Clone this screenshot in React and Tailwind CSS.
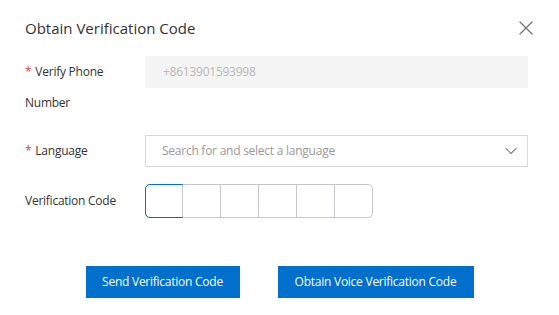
import { X, ChevronDown } from 'lucide-react';

export default function App() {
  const boxes = [0, 1, 2, 3, 4, 5];
  const required = "before:content-['*'] before:text-[#e0413a] before:mr-[4px]";

  return (
    <div className="w-[559px] h-[315px] bg-white text-[#333] font-['Open_Sans',sans-serif] tracking-[-0.25px] relative overflow-hidden">
      {/* Header */}
      <div className="flex items-center justify-between pl-[25px] pr-[21px] pt-[16px]">
        <h2 className="text-[15px] leading-[22px] tracking-normal">Obtain Verification Code</h2>
        <X size={24} strokeWidth={1.4} className="text-[#777]" />
      </div>

      {/* Form */}
      <div className="pl-[25px] pr-[31px] mt-[16px] text-[12px]">
        <div className="flex items-start">
          <label className={`w-[120px] leading-[31px] ${required}`}>Verify Phone Number</label>
          <div className="flex-1 h-[32px] bg-[#f4f4f4] flex items-center pl-[18px] text-[#b7b7b7]">
            +8613901593998
          </div>
        </div>

        <div className="flex items-center mt-[17px]">
          <label className={`w-[120px] ${required}`}>Language</label>
          <div className="flex-1 h-[32px] border border-[#d9d9d9] flex items-center justify-between pl-[16px] pr-[6px] text-[#999]">
            <span>Search for and select a language</span>
            <ChevronDown size={20} strokeWidth={1.3} className="text-[#888]" />
          </div>
        </div>

        <div className="flex items-center mt-[17px]">
          <label className="w-[120px]">Verification Code</label>
          <div className="flex h-[34px] border border-[#c5c8ce] rounded-[5px]">
            {boxes.map((i) => (
              <div
                key={i}
                className={
                  i === 0
                    ? 'w-[38px] -m-px h-[34px] border border-[#0070cc] rounded-l-[5px]'
                    : 'w-[38px] border-l border-[#c5c8ce]'
                }
              />
            ))}
          </div>
        </div>
      </div>

      {/* Actions */}
      <div className="flex justify-center gap-[38px] mt-[48px] text-[12px] text-white">
        <button className="w-[154px] h-[32px] bg-[#0070cc]">Send Verification Code</button>
        <button className="w-[196px] h-[32px] bg-[#0070cc]">Obtain Voice Verification Code</button>
      </div>
    </div>
  );
}
